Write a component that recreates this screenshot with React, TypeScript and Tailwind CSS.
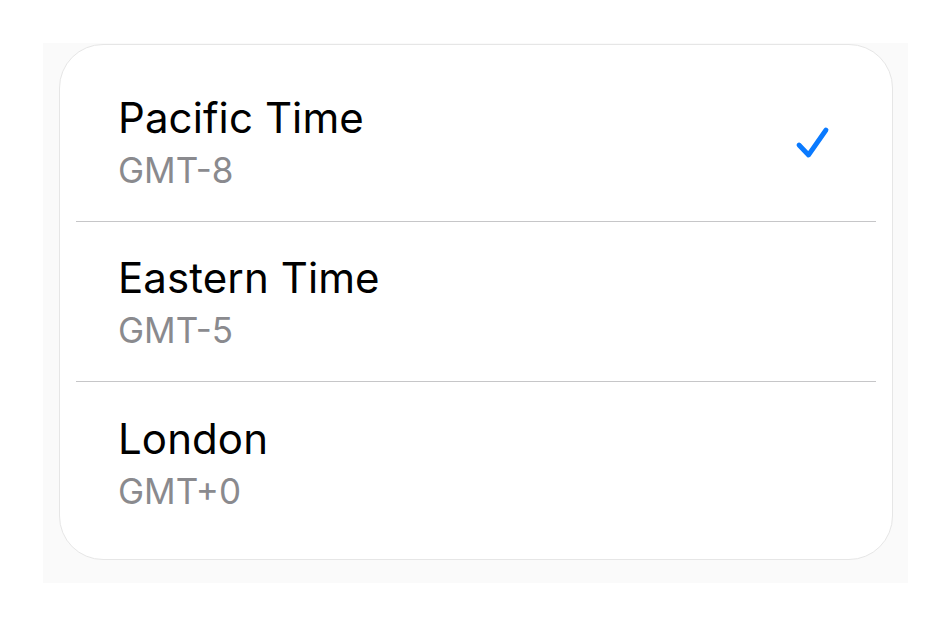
import React from 'react';

interface Zone {
    id: string;
    name: string;
    offset: string;
}

const zones: Zone[] = [
    { id: 'pacific', name: 'Pacific Time', offset: 'GMT-8' },
    { id: 'eastern', name: 'Eastern Time', offset: 'GMT-5' },
    { id: 'london', name: 'London', offset: 'GMT+0' },
];

const Check: React.FC = () => (
    <svg width="40" height="40" viewBox="0 0 40 40" fill="none">
        <path d="M7 23 L16.5 33 L34 8" stroke="#0a7aff" strokeWidth="4.8" strokeLinecap="round" strokeLinejoin="round" />
    </svg>
);

const App: React.FC = () => {
    const selected = 'pacific';

    return (
        <div className="w-[950px] h-[627px] bg-white pt-[43px] pl-[43px]" style={{ fontFamily: 'Inter, "Liberation Sans", sans-serif' }}>
            <div className="w-[865px] h-[540px] bg-[#fafafa] pl-[16px] pt-[1px]">
                <div className="w-[834px] h-[516px] bg-white border-[1.5px] border-[#e6e6e6] rounded-[44px] px-[16px] py-[17px] flex flex-col">
                    {zones.map((zone, i) => (
                        <div key={zone.id} className={`h-[160px] flex items-center justify-between pl-[42px] pr-[44px] ${i < zones.length - 1 ? 'border-b border-[#c6c6c8]' : ''}`}>
                            <div className="flex flex-col">
                                <span className="text-[42px] leading-[50px] text-black tracking-[0.1px]">{zone.name}</span>
                                <span className="text-[35px] leading-[40px] mt-[7px] text-[#8a8a8e]">{zone.offset}</span>
                            </div>
                            {zone.id === selected && <Check />}
                        </div>
                    ))}
                </div>
            </div>
        </div>
    );
};

export default App;
